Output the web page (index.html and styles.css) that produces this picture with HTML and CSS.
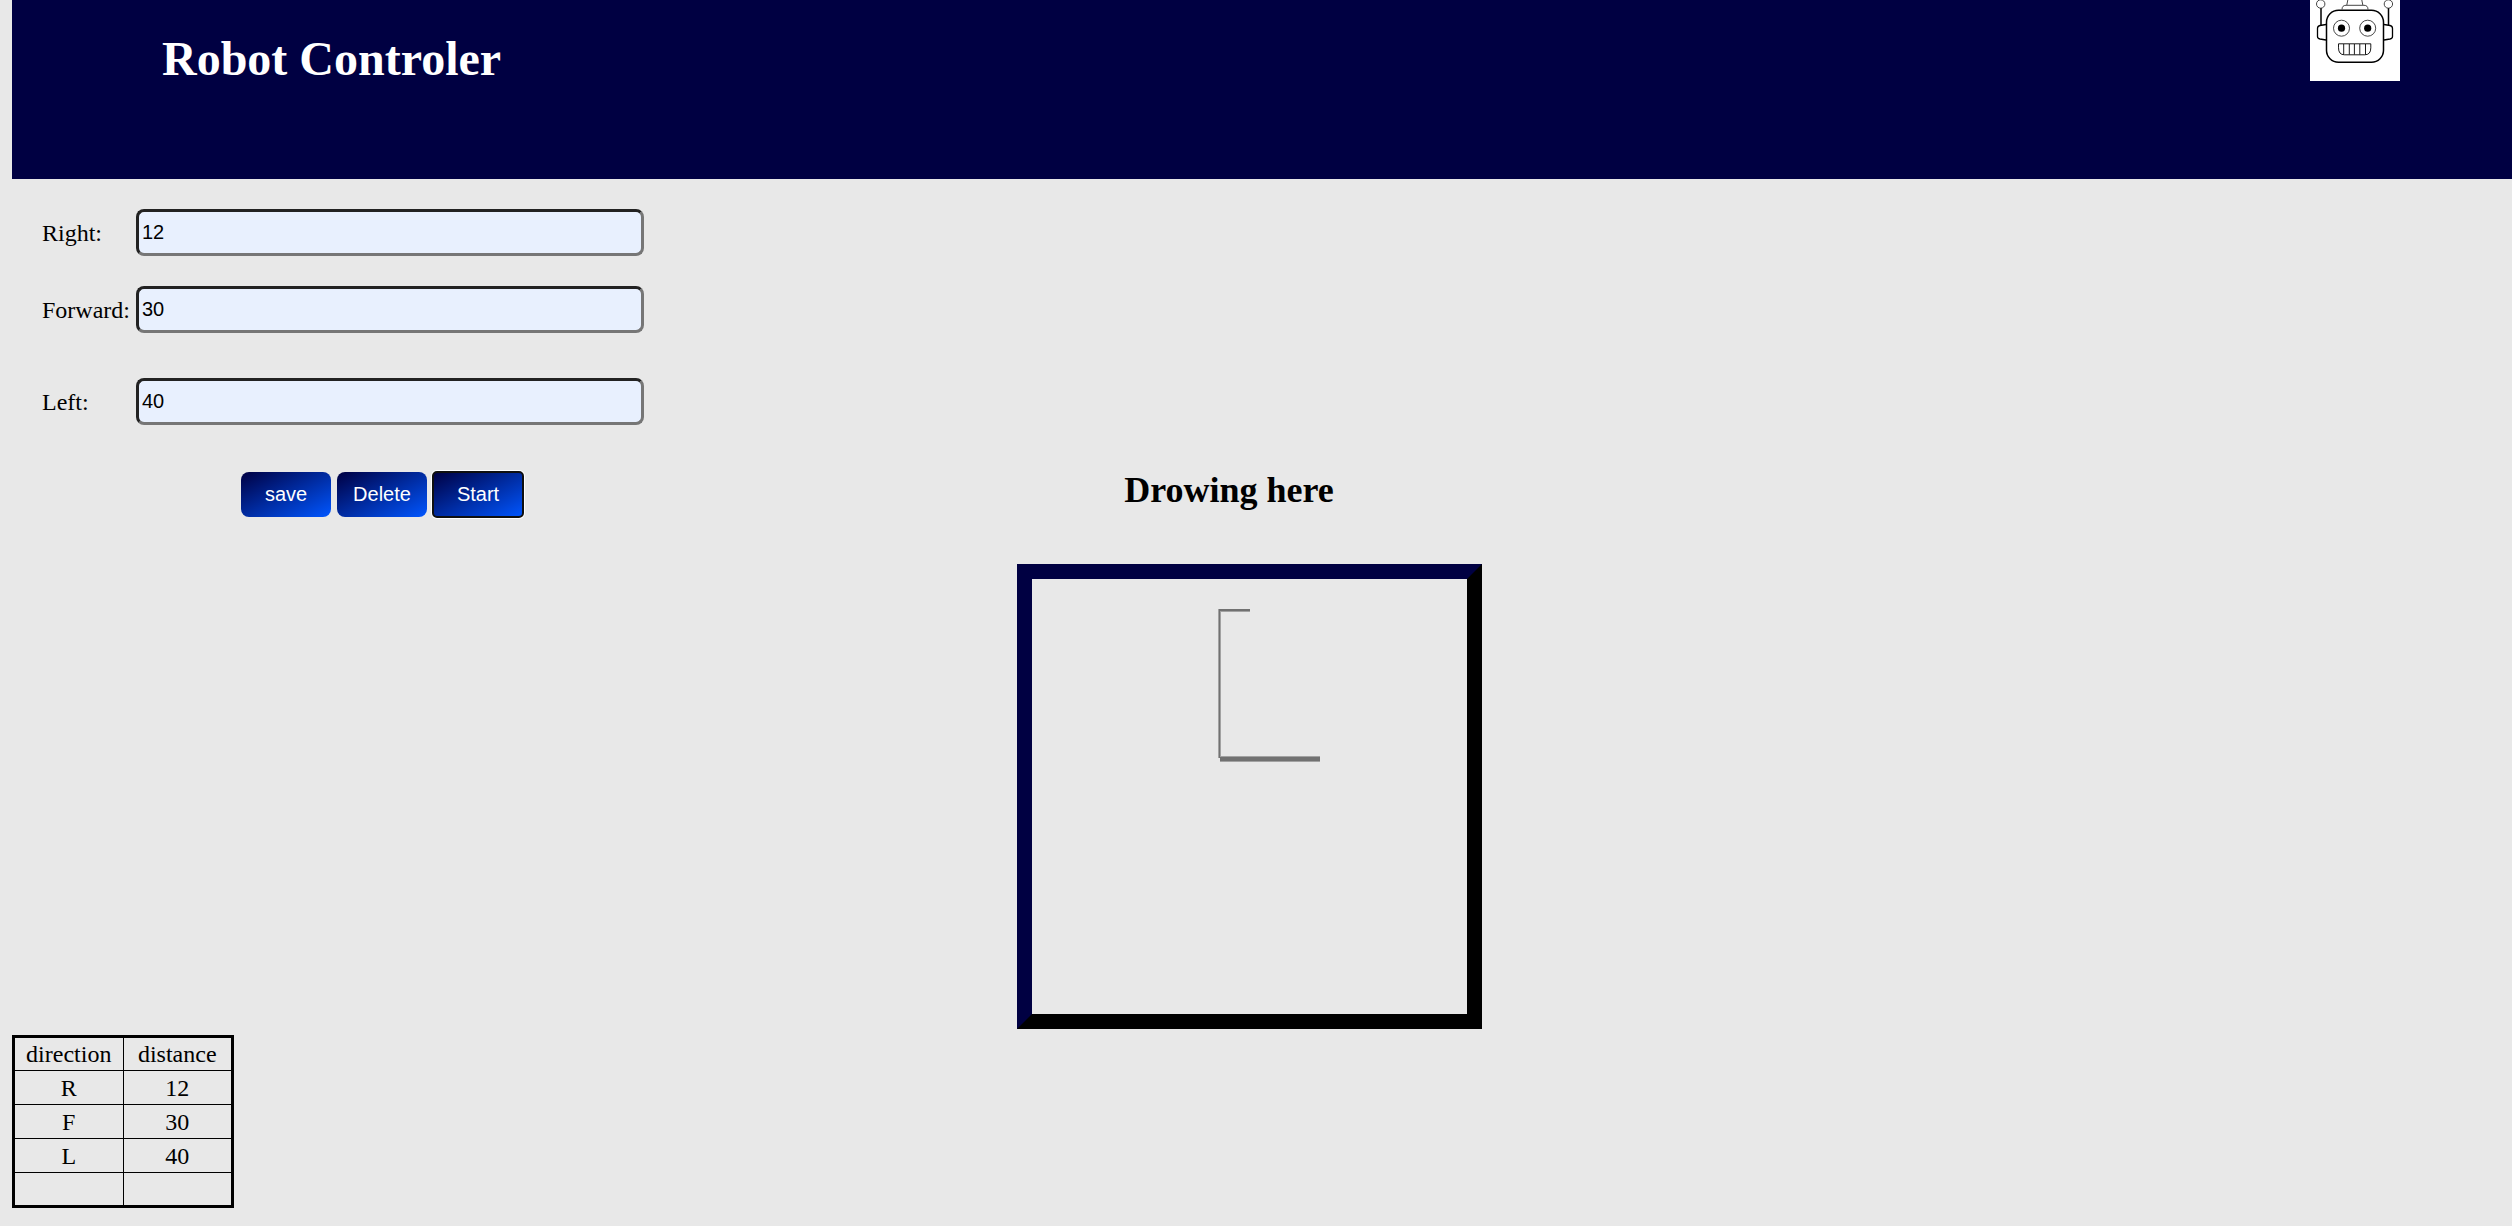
FILE: index.html
```html
<!DOCTYPE html>
<html lang="en">
<head>
<meta charset="utf-8">
<title>Robot Controler</title>
<link rel="stylesheet" href="styles.css">
</head>
<body>
<header class="header">
  <h1 class="title">Robot Controler</h1>
  <svg class="logo" viewBox="0 0 90 81" role="img" aria-label="Robot">
    <rect width="90" height="81" fill="#fff"/>
    <g fill="none" stroke="#000">
      <rect x="16.5" y="10.3" width="57" height="52" rx="12" stroke-width="1.5"/>
      <path d="M11 8v17M78.500 8v17" stroke-width="1.500"/>
      <path d="M16 24.500l-6 1q-2.500.500-2.500 3v8q0 2 2.500 2.500l6 1M74 24.500l6 1q2.500.500 2.500 3v8q0 2-2.500 2.500l-6 1" stroke-width="1.300"/>
      <g stroke="#333" stroke-width=".9">
        <circle cx="10.700" cy="4" r="4.200"/>
        <circle cx="78.400" cy="4" r="4.200"/>
        <path d="M36.800 5l1.200-6M52.800 5l-1.200-6M32 9.500q0-4.200 4-4.200h18q4 0 4 4.200"/>
        <circle cx="31.500" cy="28.200" r="8"/>
        <circle cx="57.700" cy="28.200" r="8"/>
      </g>
      <path d="M28.500 43.800h32.300v4q0 7-6 7h-20.300q-6 0-6-7zM33.700 44v10.500M39.300 44v10.500M44.400 44v10.500M49.800 44v10.500M55.500 44v10.500" stroke-width=".9"/>
    </g>
    <circle cx="31.500" cy="28.200" r="3.600"/>
    <circle cx="57.700" cy="28.200" r="3.600"/>
  </svg>
</header>
<main>
  <form class="controls">
    <div class="field"><label for="right">Right:</label><input id="right" type="text" value="12"></div>
    <div class="field"><label for="forward">Forward:</label><input id="forward" type="text" value="30"></div>
    <div class="field field-last"><label for="left">Left:</label><input id="left" type="text" value="40"></div>
    <div class="actions">
      <button type="button">save</button>
      <button type="button">Delete</button>
      <button type="button" class="active">Start</button>
    </div>
  </form>
  <section class="drawing">
    <h2>Drowing here</h2>
    <svg class="board" viewBox="0 0 435 435" role="img" aria-label="Robot path">
      <g fill="#000" fill-opacity=".3">
        <path d="M187 30h31v3h-31zM186 30h3v149h-3zM188 177h100v6h-100z"/>
        <path d="M188 30h30v2h-30zM187 30h1v149h-1zM188 178h100v4h-100z"/>
      </g>
    </svg>
  </section>
  <table class="moves">
    <tr><td>direction</td><td>distance</td></tr>
    <tr><td>R</td><td>12</td></tr>
    <tr><td>F</td><td>30</td></tr>
    <tr><td>L</td><td>40</td></tr>
    <tr><td></td><td></td></tr>
  </table>
</main>
</body>
</html>
```
FILE: styles.css
```css
* { box-sizing: border-box; }
body {
  margin: 0 0 0 12px;
  background: #e8e8e8;
  color: #000;
  font: 24px/28px "Liberation Serif", serif;
}
.header {
  display: flex;
  justify-content: space-between;
  align-items: flex-start;
  height: 179px;
  padding: 0 112px 0 150px;
  background: #000042;
  color: #fff;
}
.title { margin: 31px 0 0; font-size: 48px; line-height: 56px; }
.logo { width: 90px; height: 81px; }
.controls { padding: 30px 30px 0; }
.field { display: flex; align-items: center; margin-bottom: 30px; }
.field label { width: 94px; }
.field input {
  width: 508px;
  height: 47px;
  padding: 2px 3px;
  border: 3px solid;
  border-color: #222 #767676 #767676 #222;
  border-radius: 8px;
  background: #e8f0fe;
  color: #000;
  font: 20px "Liberation Sans", sans-serif;
}
.field-last { margin: 45px 0 47px; }
.actions { display: flex; gap: 6px; padding-left: 199px; }
.actions button {
  width: 90px;
  height: 45px;
  padding: 0;
  border: 0;
  border-radius: 8px;
  background: linear-gradient(to bottom right, #000042, #0056ff);
  color: #fff;
  font: 20px "Liberation Sans", sans-serif;
}
.actions .active {
  outline: 2px solid #101010;
  outline-offset: -1px;
  box-shadow: 0 0 0 2px #fff;
  border-radius: 4px;
}
.drawing {
  display: flex;
  flex-direction: column;
  align-items: center;
  margin-top: -47px;
  padding-right: 26px;
}
.drawing h2 { margin: 0 40px 53px 0; font-size: 36px; line-height: 41px; }
.board {
  width: 465px;
  height: 465px;
  border: 15px solid;
  border-color: #000042 #000 #000 #000042;
}
.moves {
  width: 222px;
  margin: 6px 0 17px;
  border: 3px solid #000;
  border-collapse: collapse;
  table-layout: fixed;
  text-align: center;
}
.moves td { height: 34px; padding: 0; border: 1px solid #000; }
```
